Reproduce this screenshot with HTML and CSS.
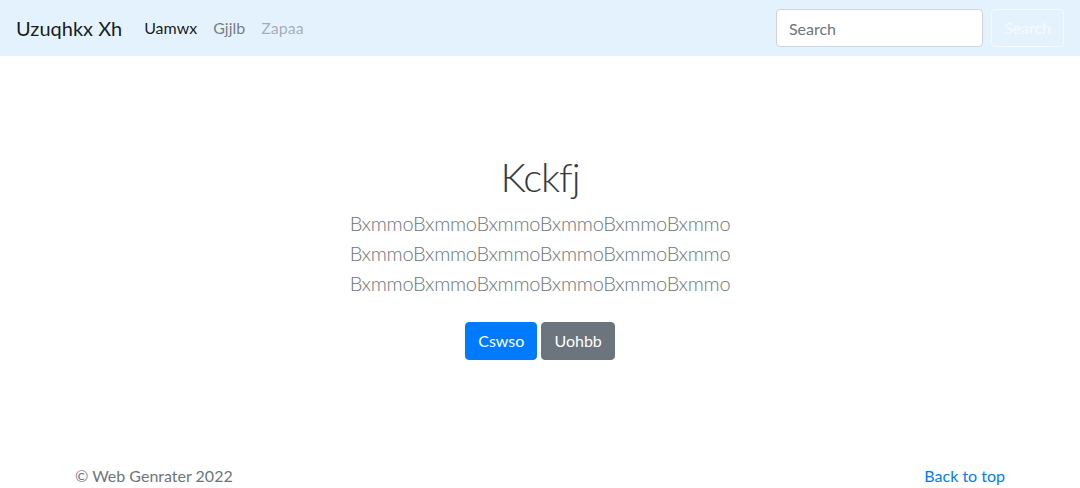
FILE: index.html
```html
<!DOCTYPE html>
<html lang="en">
<head>
<meta charset="utf-8">
<title>Uzuqhkx Xh</title>
<link rel="stylesheet" href="styles.css">
</head>
<body>
<nav class="navbar">
  <a class="brand" href="#">Uzuqhkx Xh</a>
  <ul class="nav">
    <li><a class="nav-link active" href="#">Uamwx</a></li>
    <li><a class="nav-link" href="#">Gjjlb</a></li>
    <li><a class="nav-link disabled" href="#">Zapaa</a></li>
  </ul>
  <form class="search">
    <input class="search-input" type="search" placeholder="Search">
    <button class="btn btn-outline-light" type="button">Search</button>
  </form>
</nav>
<main>
  <section class="hero">
    <div class="hero-inner">
      <h1 class="hero-title">Kckfj</h1>
      <p class="lead">BxmmoBxmmoBxmmoBxmmoBxmmoBxmmo BxmmoBxmmoBxmmoBxmmoBxmmoBxmmo BxmmoBxmmoBxmmoBxmmoBxmmoBxmmo</p>
      <p class="actions">
        <a class="btn btn-primary" href="#">Cswso</a>
        <a class="btn btn-secondary" href="#">Uohbb</a>
      </p>
    </div>
  </section>
</main>
<footer class="footer">
  <div class="footer-inner">
    <span class="copy">© Web Genrater 2022</span>
    <a class="top-link" href="#">Back to top</a>
  </div>
</footer>
</body>
</html>
```
FILE: styles.css
```css
* { box-sizing: border-box; }
html, body { margin: 0; padding: 0; }
body {
  font-family: "Segoe UI", Lato, "Open Sans", "Liberation Sans", sans-serif;
  font-size: 16px;
  line-height: 1.5;
  color: #212529;
  background: #fff;
  font-variant-ligatures: none;
}
a { text-decoration: none; }

.navbar {
  height: 56px;
  background: #e3f2fd;
  display: flex;
  align-items: center;
  padding: 0 16px;
}
.brand {
  font-size: 20px;
  line-height: 30px;
  color: rgba(0,0,0,.9);
  margin-right: 14px;
}
.nav {
  list-style: none;
  margin: 0;
  padding: 0;
  display: flex;
  flex: 1;
}
.nav-link {
  display: block;
  padding: 8px 8px;
  color: rgba(0,0,0,.5);
}
.nav-link.active { color: rgba(0,0,0,.9); }
.nav-link.disabled { color: rgba(0,0,0,.3); }

.search { display: flex; align-items: center; }
.search-input {
  width: 207px;
  height: 38px;
  padding: 6px 12px;
  font: inherit;
  color: #495057;
  background: #fff;
  border: 1px solid #ced4da;
  border-radius: 4px;
  margin-right: 8px;
  outline: none;
}
.search-input::placeholder { color: #6c757d; }

.btn {
  display: inline-block;
  font: inherit;
  line-height: 24px;
  padding: 6px 12px;
  border: 1px solid transparent;
  border-radius: 4px;
  vertical-align: middle;
}
.btn-outline-light {
  color: #f8f9fa;
  background: transparent;
  border-color: #f8f9fa;
}
.btn-primary { color: #fff; background: #007bff; border-color: #007bff; }
.btn-secondary { color: #fff; background: #6c757d; border-color: #6c757d; }

.hero {
  padding: 97px 0 48px;
  text-align: center;
}
.hero-inner {
  max-width: 640px;
  margin: 0 auto;
  padding: 0 15px;
}
.hero-title {
  font-size: 40px;
  font-weight: 300;
  line-height: 48px;
  letter-spacing: -1px;
  margin: 0 0 8px;
  color: #343a40;
}
.lead {
  font-size: 20px;
  font-weight: 300;
  line-height: 30px;
  letter-spacing: -0.25px;
  color: #6c757d;
  margin: -1px 0 17px;
}
.actions { margin: 0 0 16px; }
.actions .btn { margin: 7px 0; }

.footer {
  padding: 33px 0 46px;
  color: #6c757d;
}
.footer-inner {
  max-width: 960px;
  margin: 0 auto;
  padding: 0 15px;
  display: flex;
  justify-content: space-between;
}
.top-link { color: #007bff; }
```
